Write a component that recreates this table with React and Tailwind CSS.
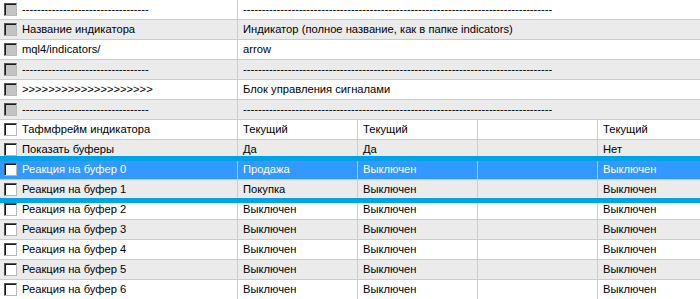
import React from 'react';

const DASH_SHORT = '-'.repeat(34);
const DASH_LONG = '-'.repeat(83);

const headRows = [
  { name: DASH_SHORT, value: DASH_LONG },
  { name: 'Название индикатора', value: 'Индикатор (полное название, как в папке indicators)' },
  { name: 'mql4/indicators/', value: 'arrow' },
  { name: DASH_SHORT, value: DASH_LONG },
  { name: '>'.repeat(20), value: 'Блок управления сигналами' },
  { name: DASH_SHORT, value: DASH_LONG },
];

const gridRows = [
  { name: 'Тафмфрейм индикатора', cells: ['Текущий', 'Текущий', '', 'Текущий'] },
  { name: 'Показать буферы', cells: ['Да', 'Да', '', 'Нет'] },
  { name: 'Реакция на буфер 0', cells: ['Продажа', 'Выключен', '', 'Выключен'], selected: true },
  { name: 'Реакция на буфер 1', cells: ['Покупка', 'Выключен', '', 'Выключен'] },
  { name: 'Реакция на буфер 2', cells: ['Выключен', 'Выключен', '', 'Выключен'] },
  { name: 'Реакция на буфер 3', cells: ['Выключен', 'Выключен', '', 'Выключен'] },
  { name: 'Реакция на буфер 4', cells: ['Выключен', 'Выключен', '', 'Выключен'] },
  { name: 'Реакция на буфер 5', cells: ['Выключен', 'Выключен', '', 'Выключен'] },
  { name: 'Реакция на буфер 6', cells: ['Выключен', 'Выключен', '', 'Выключен'] },
];

function CheckBox({ disabled }) {
  return (
    <span
      className={`h-[13px] w-[13px] shrink-0 border border-t-[#555] border-l-[#555] border-r-[#b8b8b8] border-b-[#b8b8b8] shadow-[inset_1px_1px_0_#1a1a1a] ${
        disabled ? 'bg-[#c4c4c4]' : 'bg-white'
      }`}
    />
  );
}

function App() {
  return (
    <div className="relative h-[299px] w-[700px] overflow-hidden bg-white font-['Liberation_Sans',Arial,sans-serif] text-[11.2px] leading-none text-black">
      {headRows.map((row, i) => (
        <div
          key={i}
          className={`grid h-[20px] grid-cols-[238px_1fr] border-b border-[#cbcbcb] ${i % 2 ? 'bg-[#ebebeb]' : 'bg-white'}`}
        >
          <div className="flex items-center gap-[5px] border-r border-[#cbcbcb] pl-[4px]">
            <CheckBox disabled />
            <span className="whitespace-nowrap pt-px">{row.name}</span>
          </div>
          <div className="flex items-center overflow-hidden whitespace-nowrap pl-[5px] pt-px">{row.value}</div>
        </div>
      ))}

      {gridRows.map((row, i) => {
        const idx = i + 6;
        const bg = row.selected ? 'bg-[#3399ff] text-white' : idx % 2 ? 'bg-[#ebebeb]' : 'bg-white';
        const divider = row.selected ? 'border-r-[#a9cdf3]' : 'border-r-[#cbcbcb]';
        return (
          <div key={idx} className={`grid h-[20px] grid-cols-[238px_120px_120px_120px_1fr] border-b border-b-[#cbcbcb] ${bg}`}>
            <div className={`flex items-center gap-[5px] border-r pl-[4px] ${divider}`}>
              <CheckBox />
              <span className="whitespace-nowrap pt-px">{row.name}</span>
            </div>
            {row.cells.map((c, j) => (
              <div
                key={j}
                className={`flex items-center whitespace-nowrap pl-[5px] pt-px ${j < 3 ? `border-r ${divider}` : ''}`}
              >
                {c}
              </div>
            ))}
          </div>
        );
      })}

      <div className="absolute left-0 top-[156px] h-[5px] w-full bg-[#00a3e6]" />
      <div className="absolute left-0 top-[198px] h-[5px] w-full bg-[#00a3e6]" />
    </div>
  );
}

export default App;
